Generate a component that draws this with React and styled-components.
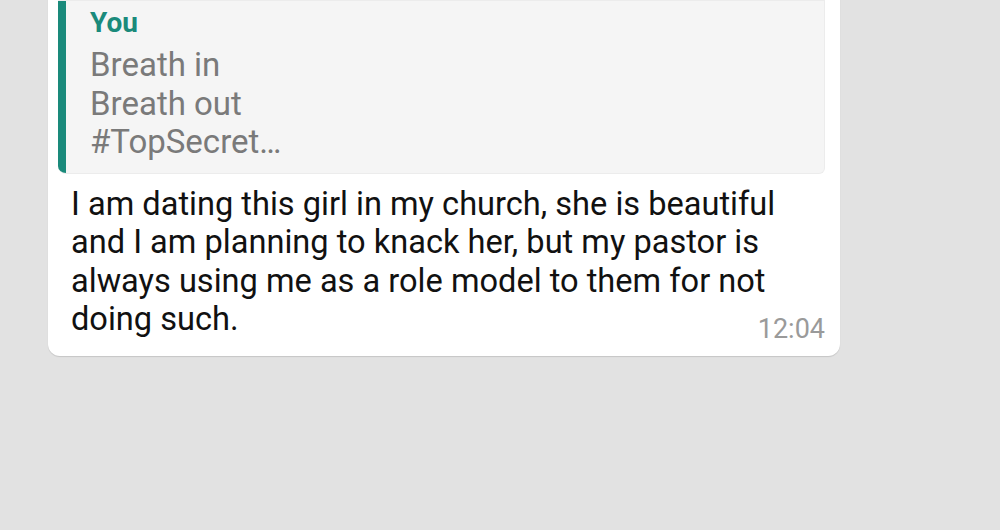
import React from "react";
import styled, { createGlobalStyle } from "styled-components";

const GlobalStyle = createGlobalStyle`
    html, body {
        margin: 0;
        padding: 0;
        background: #e2e2e2;
        font-family: Roboto, "Noto Sans", sans-serif;
        overflow: hidden;
    }
`;

const Screen = styled.div`
    width: 1000px;
    height: 530px;
    background: #e2e2e2;
    overflow: hidden;
`;

const Bubble = styled.div`
    margin: -10px 0 0 48px;
    width: 792px;
    box-sizing: border-box;
    background: #ffffff;
    border-radius: 0 0 12px 12px;
    padding: 10px 15px 17px 10px;
    box-shadow: 0 1px 1px rgba(0, 0, 0, 0.13);
`;

const Quote = styled.div`
    display: flex;
    background: #f5f5f5;
    border: 1px solid #ececec;
    border-left: none;
    border-radius: 0 0 6px 8px;
    overflow: hidden;
`;

const QuoteBar = styled.div`
    width: 8px;
    flex-shrink: 0;
    background: #1a8a7b;
`;

const QuoteBody = styled.div`
    padding: 4px 0 11px 24px;
`;

const Author = styled.div`
    color: #1a8a7b;
    font-size: 28px;
    font-weight: 700;
    line-height: 36px;
    margin-bottom: 5px;
`;

const QuoteLine = styled.div`
    color: #7a7a7a;
    font-size: 33px;
    line-height: 38.5px;
`;

const Message = styled.div`
    margin: 11px 0 0 13px;
    padding-right: 10px;
    color: #111111;
    font-size: 32.6px;
    line-height: 38.5px;
`;

// float puts the time at the right end of the last line
const Time = styled.span`
    float: right;
    margin: 12px -10px 0 0;
    color: #9a9a9a;
    font-size: 27px;
    line-height: 34px;
`;

export default function App() {
    return (
        <Screen>
            <GlobalStyle />
            <Bubble>
                <Quote>
                    <QuoteBar />
                    <QuoteBody>
                        <Author>You</Author>
                        <QuoteLine>Breath in</QuoteLine>
                        <QuoteLine>Breath out</QuoteLine>
                        <QuoteLine>#TopSecret…</QuoteLine>
                    </QuoteBody>
                </Quote>
                <Message>
                    I am dating this girl in my church, she is beautiful and I am planning to knack her, but my pastor is always using me as a role model to them for not doing such.
                    <Time>12:04</Time>
                </Message>
            </Bubble>
        </Screen>
    );
}
